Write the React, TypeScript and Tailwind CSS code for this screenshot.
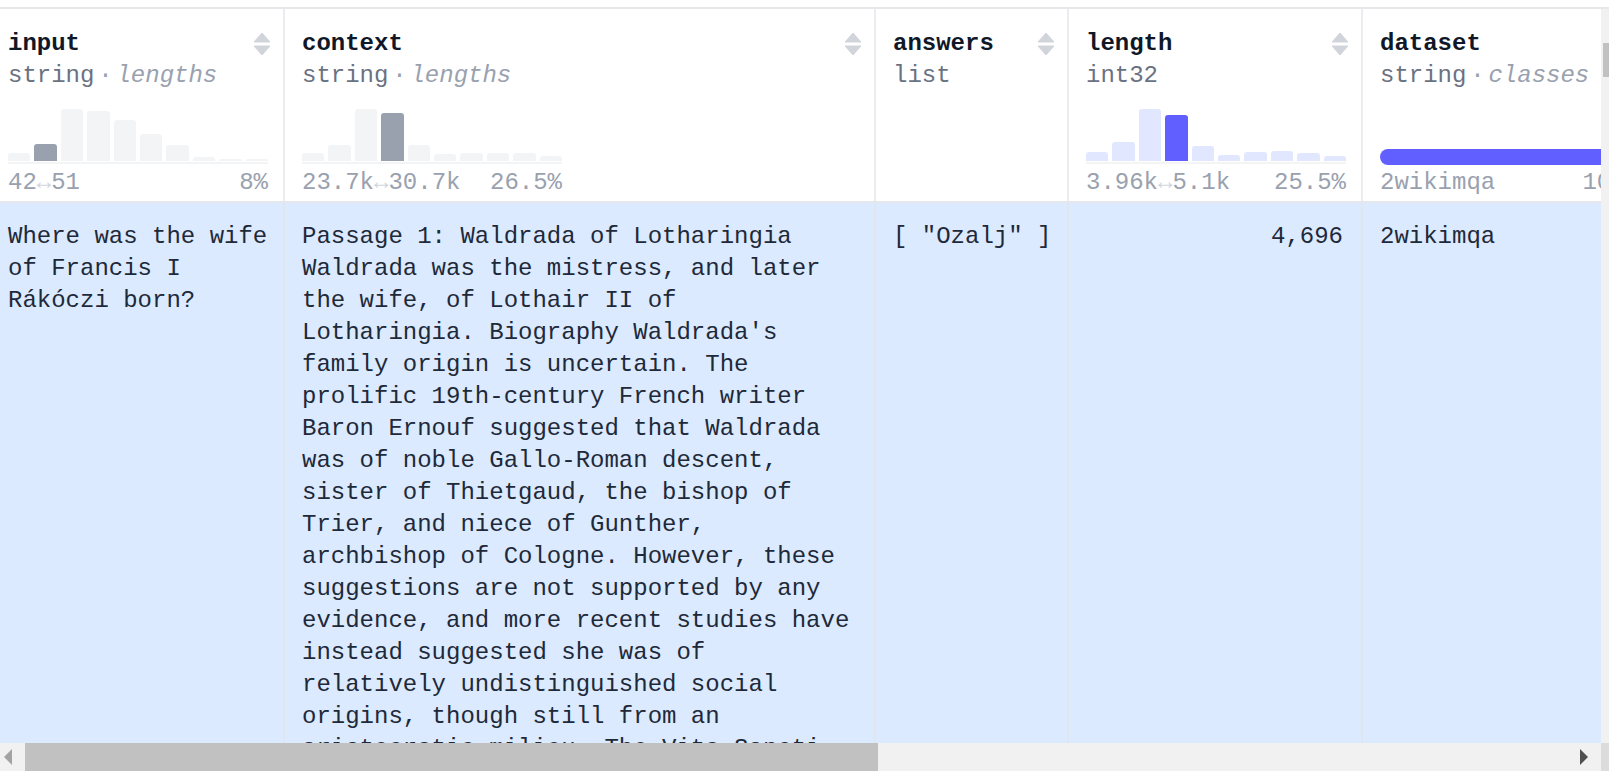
import React from "react";

type Tone = "gray" | "indigo";

const CONTEXT =
  "Passage 1: Waldrada of Lotharingia Waldrada was the mistress, and later the wife, of Lothair II of Lotharingia. Biography Waldrada's family origin is uncertain. The prolific 19th-century French writer Baron Ernouf suggested that Waldrada was of noble Gallo-Roman descent, sister of Thietgaud, the bishop of Trier, and niece of Gunther, archbishop of Cologne. However, these suggestions are not supported by any evidence, and more recent studies have instead suggested she was of relatively undistinguished social origins, though still from an aristocratic milieu. The Vita Sancti Deicoli states that Waldrada was related to Eberhard II, Count of Nordgau.";

function SortIcon() {
  return (
    <svg width="18" height="24" viewBox="0 0 18 24" className="shrink-0">
      <path d="M1 10 L9 1 L17 10 Z" fill="#d1d5db" stroke="#d1d5db" strokeWidth="1" strokeLinejoin="round" />
      <path d="M1 14 L17 14 L9 23 Z" fill="#d1d5db" stroke="#d1d5db" strokeWidth="1" strokeLinejoin="round" />
    </svg>
  );
}

function Histogram({
  heights,
  active,
  tone,
  from,
  to,
  pct,
}: {
  heights: number[];
  active: number;
  tone: Tone;
  from: string;
  to: string;
  pct: string;
}) {
  // 10 fixed bins; the highlighted bin is the one the current row falls in
  const idle = tone === "gray" ? "bg-gray-100" : "bg-indigo-100";
  const hot = tone === "gray" ? "bg-gray-400" : "bg-indigo-500";
  return (
    <div className="mt-[15px] w-[260px]">
      <div className="flex h-[54px] items-end gap-[4px]">
        {heights.map((h, i) => (
          <div
            key={i}
            className={`flex-1 rounded-t-[3px] ${i === active ? hot : idle}`}
            style={{ height: `${h}px` }}
          />
        ))}
      </div>
      <div className="mt-[1px] h-[2px] bg-gray-100" />
      <div className="mt-[3px] flex justify-between text-gray-400">
        <span>
          {from}
          <span className="text-gray-300">↔</span>
          {to}
        </span>
        <span>{pct}</span>
      </div>
    </div>
  );
}

function HeaderCell({
  name,
  type,
  kind,
  width,
  first = false,
  children,
}: {
  name: string;
  type: string;
  kind?: string;
  width: string;
  first?: boolean;
  children?: React.ReactNode;
}) {
  return (
    <div
      className={`${width} shrink-0 border-r-2 border-[#eaecf0] bg-white pt-[19px] pb-[2px] pr-[12px] ${
        first ? "pl-[8px]" : "pl-[17px]"
      }`}
    >
      <div className="flex h-[32px] items-center justify-between">
        <span className="font-bold text-gray-900">{name}</span>
        <SortIcon />
      </div>
      <div className="whitespace-nowrap text-gray-500">
        {type}
        {kind && (
          <span className="text-gray-400">
            <span className="inline-block w-[22px] text-center">·</span>
            <span className="italic">{kind}</span>
          </span>
        )}
      </div>
      {children}
    </div>
  );
}

function BodyCell({
  width,
  first = false,
  right = false,
  pad = "pr-[12px]",
  children,
}: {
  width: string;
  first?: boolean;
  right?: boolean;
  pad?: string;
  children?: React.ReactNode;
}) {
  return (
    <div
      className={`${width} ${pad} shrink-0 border-r-2 border-[#e1e6ee] pt-[18px] ${
        first ? "pl-[8px]" : "pl-[17px]"
      } ${right ? "text-right" : ""}`}
    >
      {children}
    </div>
  );
}

function Arrow({ dir, color }: { dir: "left" | "right"; color: string }) {
  return (
    <svg width="8" height="16" viewBox="0 0 8 16">
      <polygon points={dir === "left" ? "8,0 0,8 8,16" : "0,0 8,8 0,16"} fill={color} />
    </svg>
  );
}

export default function App() {
  return (
    <div className="flex h-[771px] w-[1609px] flex-col overflow-hidden bg-white font-['Liberation_Mono','DejaVu_Sans_Mono',monospace] text-[24px] leading-[32px] text-gray-800">
      <div className="h-[7px] shrink-0" />
      <div className="h-[2px] shrink-0 bg-[#e5e7eb]" />

      <div className="flex min-h-0 flex-1">
        <div className="min-w-0 flex-1 overflow-hidden">
          <div className="flex w-max flex-col">
            <div className="flex border-b-2 border-[#e5e7eb]">
              <HeaderCell name="input" type="string" kind="lengths" width="w-[285px]" first>
                <Histogram
                  heights={[8.5, 17, 52, 50, 41, 27, 16.5, 4, 2, 2]}
                  active={1}
                  tone="gray"
                  from="42"
                  to="51"
                  pct="8%"
                />
              </HeaderCell>
              <HeaderCell name="context" type="string" kind="lengths" width="w-[591px]">
                <Histogram
                  heights={[8, 16, 52, 48, 16, 7, 8, 8, 8, 5]}
                  active={3}
                  tone="gray"
                  from="23.7k"
                  to="30.7k"
                  pct="26.5%"
                />
              </HeaderCell>
              <HeaderCell name="answers" type="list" width="w-[193px]" />
              <HeaderCell name="length" type="int32" width="w-[294px]">
                <Histogram
                  heights={[9, 19, 52, 46, 15, 6, 9, 10, 8, 5]}
                  active={3}
                  tone="indigo"
                  from="3.96k"
                  to="5.1k"
                  pct="25.5%"
                />
              </HeaderCell>
              <HeaderCell name="dataset" type="string" kind="classes" width="w-[302px]">
                <div className="mt-[57px] w-[260px]">
                  <div className="h-[16px] rounded-full bg-indigo-500" />
                  <div className="mt-[2px] flex justify-between text-gray-400">
                    <span>2wikimqa</span>
                    <span>100%</span>
                  </div>
                </div>
              </HeaderCell>
            </div>

            <div className="flex h-[560px] bg-blue-100">
              <BodyCell width="w-[285px]" first>
                Where was the wife of Francis I Rákóczi born?
              </BodyCell>
              <BodyCell width="w-[591px]" pad="pr-[18px]">
                {CONTEXT}
              </BodyCell>
              <BodyCell width="w-[193px]">
                <span className="whitespace-nowrap">[ "Ozalj" ]</span>
              </BodyCell>
              <BodyCell width="w-[294px]" pad="pr-[18px]" right>
                4,696
              </BodyCell>
              <BodyCell width="w-[302px]">2wikimqa</BodyCell>
            </div>
          </div>
        </div>

        <div className="w-[8px] shrink-0 bg-[#f1f1f1] pt-[34px] pl-[2px]">
          <div className="h-[34px] bg-[#c1c1c1]" />
        </div>
      </div>

      <div className="flex h-[28px] shrink-0 bg-[#f1f1f1]">
        <div className="flex w-[25px] shrink-0 items-center pl-[4px]">
          <Arrow dir="left" color="#a3a3a3" />
        </div>
        <div className="w-[853px] shrink-0 bg-[#c1c1c1]" />
        <div className="flex-1" />
        <div className="flex w-[25px] shrink-0 items-center pl-[4px]">
          <Arrow dir="right" color="#505050" />
        </div>
        <div className="w-[8px] shrink-0 bg-[#dcdcdc]" />
      </div>
    </div>
  );
}
